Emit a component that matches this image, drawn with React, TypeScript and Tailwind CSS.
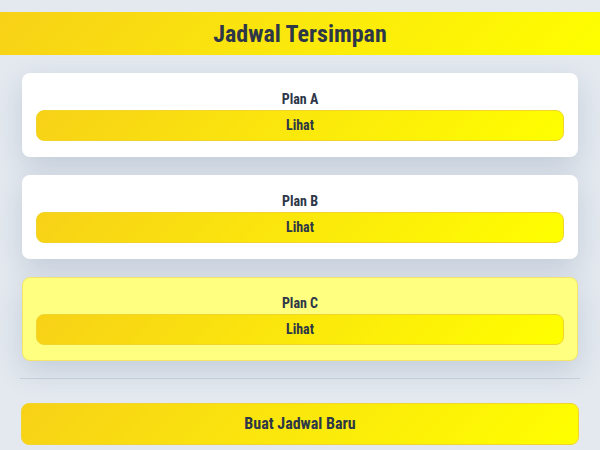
import React from "react";

const plans = [
  { name: "Plan A", active: false },
  { name: "Plan B", active: false },
  { name: "Plan C", active: true },
];

const font = { fontFamily: '"Roboto", "Liberation Sans", sans-serif', fontStretch: "78%" };

export default function App() {
  return (
    <div
      className="min-h-[450px] w-[600px] bg-[#e4e9ef] pt-3 text-[#2d3748]"
      style={font}
    >
      <header className="flex h-[43px] items-center justify-center bg-linear-[135deg] from-[#f7d117] to-[#ffff00]">
        <h1 className="text-[24px] font-bold leading-none">Jadwal Tersimpan</h1>
      </header>

      <div className="flex flex-col gap-[18px] px-[22px] pt-[18px]">
        {plans.map((plan) => (
          <div
            key={plan.name}
            className={
              plan.active
                ? "rounded-lg border border-[#f3e46a] bg-[#ffff80] px-[13px] pt-[15px] pb-[15px] shadow-[0_10px_28px_rgba(90,115,150,0.24)]"
                : "rounded-lg bg-white px-[14px] pt-4 pb-4 shadow-[0_10px_28px_rgba(90,115,150,0.24)]"
            }
          >
            <div className="text-center text-[14px] font-bold leading-5">
              {plan.name}
            </div>
            <button className="mt-px flex h-[31px] w-full items-center justify-center rounded-lg border border-[#f2d52c] bg-linear-[135deg] from-[#f7d117] to-[#ffff00] text-[14px] font-bold">
              Lihat
            </button>
          </div>
        ))}
      </div>

      <div className="mx-5 mt-[17px] h-px bg-[#cbd3dd]" />

      <div className="px-[21px] pt-6">
        <button className="flex h-[42px] w-full items-center justify-center rounded-lg border border-[#f2d52c] bg-linear-[135deg] from-[#f7d117] to-[#ffff00] text-[16px] font-bold">
          Buat Jadwal Baru
        </button>
      </div>
    </div>
  );
}
